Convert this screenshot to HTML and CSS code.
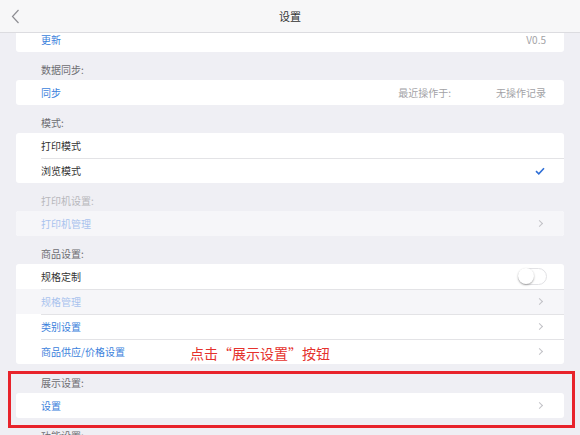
FILE: index.html
```html
<!DOCTYPE html>
<html lang="zh-CN">
<head>
    <meta charset="UTF-8">
    <meta name="viewport" content="width=device-width, initial-scale=1.0">
    <title>设置</title>
    <link rel="stylesheet" href="styles.css">
</head>
<body>
    <div class="navbar">
        <svg class="back" width="9" height="15" viewBox="0 0 9 15">
            <path d="M7.5 1 L1.5 7.5 L7.5 14" fill="none" stroke="#8e8e93" stroke-width="1.2"/>
        </svg>
        <div class="title">设置</div>
    </div>

    <div class="content">
        <div class="list">
            <div class="card first">
                <div class="row">
                    <span class="link">更新</span>
                    <span class="value">V0.5</span>
                </div>
            </div>

            <div class="header">数据同步:</div>
            <div class="card">
                <div class="row">
                    <span class="link">同步</span>
                    <span class="value sync-label">最近操作于:</span>
                    <span class="value">无操作记录</span>
                </div>
            </div>

            <div class="header">模式:</div>
            <div class="card">
                <div class="row">
                    <span>打印模式</span>
                </div>
                <div class="row">
                    <span>浏览模式</span>
                    <svg class="check" width="10" height="8" viewBox="0 0 10 8">
                        <path d="M1 4.2 L3.8 6.8 L9 1.2" fill="none" stroke="#2f6fd6" stroke-width="1.6"/>
                    </svg>
                </div>
            </div>

            <div class="header disabled">打印机设置:</div>
            <div class="card">
                <div class="row off">
                    <span class="link">打印机管理</span>
                    <span class="chevron"></span>
                </div>
            </div>

            <div class="header">商品设置:</div>
            <div class="card">
                <div class="row">
                    <span>规格定制</span>
                    <span class="toggle"><span class="knob"></span></span>
                </div>
                <div class="row off">
                    <span class="link">规格管理</span>
                    <span class="chevron"></span>
                </div>
                <div class="row">
                    <span class="link">类别设置</span>
                    <span class="chevron"></span>
                </div>
                <div class="row">
                    <span class="link">商品供应/价格设置</span>
                    <span class="chevron"></span>
                </div>
            </div>

            <div class="header tall">展示设置:</div>
            <div class="card">
                <div class="row">
                    <span class="link">设置</span>
                    <span class="chevron"></span>
                </div>
            </div>

            <div class="header">功能设置:</div>
        </div>

        <!-- 标注 -->
        <div class="note">点击“展示设置”按钮</div>
        <div class="highlight"></div>
    </div>
</body>
</html>
```

FILE: styles.css
```css
body {
    margin: 0;
    font-family: "Noto Sans CJK SC", "Noto Sans", sans-serif;
    font-size: 10px;
    color: #333;
    background-color: #efeff4;
    width: 580px;
    height: 435px;
    overflow: hidden;
}

.navbar {
    height: 32px;
    background-color: #f7f7f8;
    border-bottom: 1px solid #dcdce0;
    display: flex;
    align-items: center;
    justify-content: center;
    position: relative;
    z-index: 2;
}

.navbar .back {
    position: absolute;
    left: 11px;
    top: 9px;
}

.title {
    font-size: 11px;
    color: #333;
}

.content {
    position: relative;
    height: 402px;
    overflow: hidden;
}

.list {
    margin-top: -6px;
    padding: 0 16px;
}

.card {
    background-color: #fff;
    border-radius: 3px;
    overflow: hidden;
}

.row {
    height: 25px;
    display: flex;
    align-items: center;
    padding: 0 18px 0 25px;
    position: relative;
}

.row + .row::before {
    content: "";
    position: absolute;
    left: 25px;
    right: 0;
    top: 0;
    border-top: 1px solid #e3e3e6;
}

.row > span:first-child {
    flex: 1;
}

.row.off {
    background-color: #f6f6f9;
}

.link {
    color: #3b7fdc;
}

.row.off .link {
    color: #a9c3ee;
}

.value {
    color: #a2a2a6;
}

.sync-label {
    margin-right: 45px;
}

.header {
    height: 28px;
    box-sizing: border-box;
    padding: 13px 0 0 25px;
    line-height: 10px;
    color: #6d6d72;
}

.header.tall {
    height: 29px;
    padding-top: 14px;
}

.header.disabled {
    color: #b8b8bc;
}

.chevron {
    width: 4px;
    height: 4px;
    border-top: 1px solid #c2c2c7;
    border-right: 1px solid #c2c2c7;
    transform: rotate(45deg);
    margin-right: 4px;
}

.check {
    margin-right: 1px;
}

.toggle {
    width: 27px;
    height: 15px;
    border: 1px solid #e2e2e5;
    border-radius: 9px;
    position: relative;
    margin-right: -1px;
}

.knob {
    position: absolute;
    left: -1px;
    top: -1px;
    width: 16px;
    height: 16px;
    border-radius: 50%;
    background-color: #fff;
    box-shadow: 0 1px 2px rgba(0, 0, 0, 0.35);
}

.note {
    position: absolute;
    left: 190px;
    top: 310px;
    font-size: 14px;
    line-height: 20px;
    color: #e5322d;
}

.highlight {
    position: absolute;
    left: 8px;
    top: 338px;
    width: 561px;
    height: 51px;
    border: 3px solid #e8232b;
}
```
